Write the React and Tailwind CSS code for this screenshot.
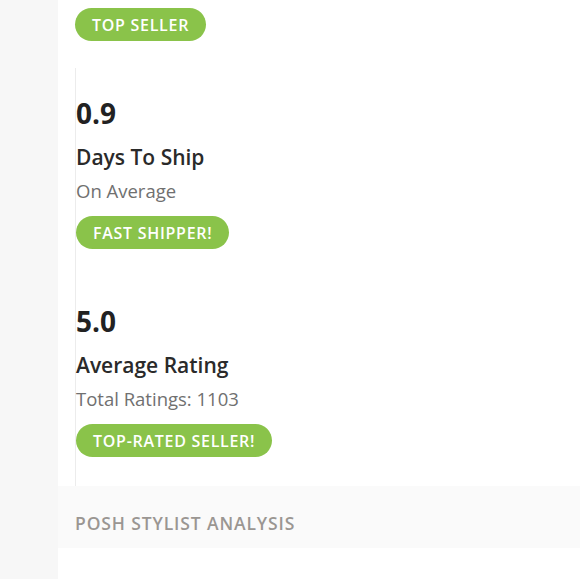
import React from "react";

const Badge = ({ children }) => (
  <span className="inline-flex h-[33px] items-center rounded-full bg-[#8ac34a] px-[17px] text-[16px] font-semibold uppercase tracking-[0.045em] text-white">
    {children}
  </span>
);

const Stat = ({ value, title, sub, badge }) => (
  <div className="pt-[28px] pb-[27px]">
    <p className="text-[28px] font-bold leading-[34px] text-[#222]">{value}</p>
    <p className="mt-[13px] text-[21px] font-semibold leading-[28px] text-[#2a2a2a]">{title}</p>
    <p className="mt-[7px] text-[18.5px] leading-[26px] text-[#707070]">{sub}</p>
    <div className="mt-[12px] flex">
      <Badge>{badge}</Badge>
    </div>
  </div>
);

export default function App() {
  return (
    <div
      className="flex min-h-[579px] bg-[#f7f7f7]"
      style={{ fontFamily: "'Open Sans', Lato, sans-serif" }}
    >
      <div className="w-[58px] shrink-0" />
      <div className="flex flex-1 flex-col bg-white">
        <div className="flex pl-[17px] pt-[8px]">
          <Badge>Top Seller</Badge>
        </div>

        <div className="ml-[17px] mt-[27px] border-l border-[#ececec] pb-[2px]">
          <Stat value="0.9" title="Days To Ship" sub="On Average" badge="Fast Shipper!" />
          <Stat value="5.0" title="Average Rating" sub="Total Ratings: 1103" badge="Top-Rated Seller!" />
        </div>

        <div className="flex h-[62px] items-center bg-[#fafafa] px-[17px] pt-[12px]">
          <h2 className="text-[17.5px] font-semibold uppercase tracking-[0.05em] text-[#9a9692]">
            Posh Stylist Analysis
          </h2>
        </div>
        <div className="flex-1 bg-white" />
      </div>
    </div>
  );
}
